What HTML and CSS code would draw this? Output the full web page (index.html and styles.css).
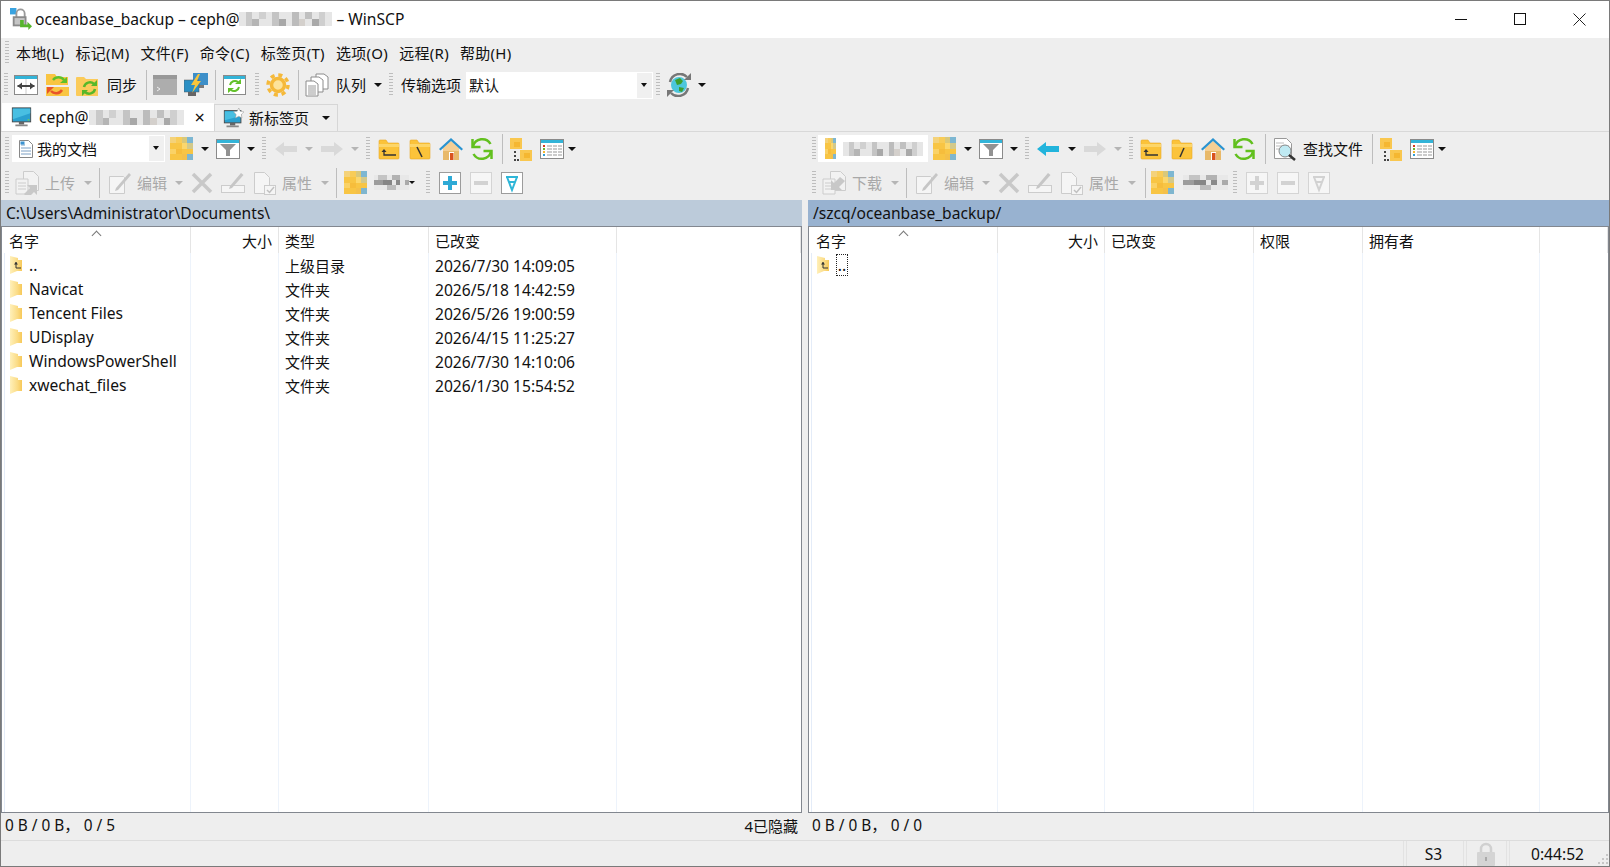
FILE: index.html
```html
<!DOCTYPE html>
<html lang="zh">
<head>
<meta charset="utf-8">
<title>WinSCP</title>
<link rel="stylesheet" href="styles.css">
</head>
<body>
<svg class="sprite" xmlns="http://www.w3.org/2000/svg">
  <defs>
    <linearGradient id="dirfill" x1="0" x2="1" y1="0" y2="0"><stop offset="0" stop-color="#fff0ba"/><stop offset=".6" stop-color="#fbdc86"/><stop offset="1" stop-color="#f7c95a"/></linearGradient>
    <symbol id="mos-light" viewBox="0 0 14 2" preserveAspectRatio="none">
      <rect width="14" height="2" fill="#e6e6e6"/><rect x="1" width="1" height="2" fill="#c9c9c9"/><rect x="2" y="1" width="1" height="1" fill="#b5b5b5"/><rect x="3" width="1" height="1" fill="#d0d0d0"/><rect x="5" width="1" height="2" fill="#c4c4c4"/><rect x="6" y="1" width="1" height="1" fill="#a8a8a8"/><rect x="8" width="1" height="2" fill="#bcbcbc"/><rect x="9" y="1" width="1" height="1" fill="#d4d0cc"/><rect x="10" width="1" height="1" fill="#c0c0c0"/><rect x="11" y="1" width="1" height="1" fill="#a9a9a9"/><rect x="12" width="1" height="2" fill="#cfcfcf"/>
    </symbol>
    <symbol id="mos-dark" viewBox="0 0 8 3" preserveAspectRatio="none">
      <rect width="8" height="3" fill="#e8e8e8"/><rect y="1" width="2" height="1" fill="#9c9c9c"/><rect x="1" width="2" height="1" fill="#c4c4c4"/><rect x="2" y="1" width="2" height="1" fill="#868686"/><rect x="3" y="2" width="2" height="1" fill="#bcbcbc"/><rect x="4" width="2" height="1" fill="#b2b2b2"/><rect x="5" y="1" width="1" height="1" fill="#8a8a8a"/><rect x="7" y="1" width="1" height="1" fill="#aaaaaa"/>
    </symbol>
    <symbol id="mos-folder" viewBox="0 0 4 4" preserveAspectRatio="none">
      <rect width="4" height="4" fill="#f8c544"/><rect width="1" height="1" fill="#f4d27a"/><rect x="1" width="1" height="1" fill="#f8cc58"/><rect x="2" width="1" height="1" fill="#d9c87a"/><rect x="3" width="1" height="1" fill="#7db7d2"/><rect x="2" y="1" width="1" height="1" fill="#fbd76d"/><rect x="3" y="1" width="1" height="1" fill="#d3c98a"/><rect y="2" width="1" height="1" fill="#fad266"/><rect x="1" y="2" width="1" height="1" fill="#f6bd3c"/><rect x="3" y="3" width="1" height="1" fill="#7fb6cf"/><rect x="2" y="3" width="1" height="1" fill="#f4c04a"/>
    </symbol>
    <symbol id="compare" viewBox="0 0 24 24"><rect x=".5" y="2.500" width="23" height="19" fill="#fff" stroke="#8a8a8a"/><rect x="1" y="3" width="22" height="3" fill="#33b4d8"/><path d="M12 6v15" stroke="#ccc"/><path d="M3.500 13h17" stroke="#444" stroke-width="2"/><path d="M8 9.500 3.500 13 8 16.500zM16 9.500l4.500 3.500-4.500 3.500z" fill="#444"/></symbol>
    <symbol id="fsync" viewBox="0 0 24 24"><path d="M1 1h9l2 3h11v8H1z" fill="#f9c542"/><path d="M1 14h23v9H1z" fill="#f9c542"/><path d="M8 7a7 7 0 0 1 11 0" fill="none" stroke="#5ec12a" stroke-width="2.500"/><path d="M15 10h7V4z" fill="#5ec12a"/><path d="M17 17a7 7 0 0 1-11 1" fill="none" stroke="#e8542a" stroke-width="2.500"/><path d="M9 14H2v7z" fill="#e8542a"/></symbol>
    <symbol id="fgreen" viewBox="0 0 24 24"><path d="M0 5a1 1 0 0 1 1-1h7l2 2h12v17H1a1 1 0 0 1-1-1z" fill="#fbcb5a"/><path d="M8 14a6 6 0 0 1 10-3" fill="none" stroke="#57b82a" stroke-width="2.500"/><path d="M15 13h6V7z" fill="#57b82a"/><path d="M19 16a6 6 0 0 1-10 3" fill="none" stroke="#57b82a" stroke-width="2.500"/><path d="M12 17H6v6z" fill="#57b82a"/></symbol>
    <symbol id="term" viewBox="0 0 24 24"><rect y="2" width="24" height="20" fill="#adadad"/><rect y="2" width="24" height="4" fill="#999"/><path d="m4 14 3 2-3 2" fill="none" stroke="#eee"/></symbol>
    <symbol id="putty" viewBox="0 0 24 24"><rect x="9" y="0" width="15" height="12" fill="#3d8fc9"/><rect x="11" y="12" width="9" height="3" fill="#7a7a7a"/><rect y="7" width="15" height="12" fill="#2a8fc4" stroke="#555" stroke-width=".5"/><rect x="4" y="19" width="8" height="4" fill="#666"/><path d="m14 1-7 11h4l-3 8 9-12h-4l3-7z" fill="#f8c53a"/></symbol>
    <symbol id="wsync" viewBox="0 0 24 24"><rect x=".5" y="2.500" width="22" height="19" fill="#fff" stroke="#8a8a8a"/><rect x="1" y="3" width="21" height="3" fill="#33b4d8"/><path d="M7 12a5 5 0 0 1 8-3" fill="none" stroke="#62c12a" stroke-width="2"/><path d="M12 11h6V6z" fill="#62c12a"/><path d="M16 14a5 5 0 0 1-8 3" fill="none" stroke="#62c12a" stroke-width="2"/><path d="M11 15H5v5z" fill="#62c12a"/></symbol>
    <symbol id="gear" viewBox="0 0 24 24"><circle cx="12" cy="12" r="10" fill="none" stroke="#f5b93a" stroke-width="3.500" stroke-dasharray="4.100 3.750"/><circle cx="12" cy="12" r="6.500" fill="#fde39a" stroke="#f5b93a" stroke-width="3.500"/></symbol>
    <symbol id="queue" viewBox="0 0 24 24"><path d="M11 1h8l4 3v12H11z" fill="#fff" stroke="#8c8c8c"/><path d="M6 4h8l4 3v12H6z" fill="#fff" stroke="#8c8c8c"/><path d="M1 8h8l4 3v12H1z" fill="#fff" stroke="#8c8c8c"/><path d="M3 13h8M3 15h8M3 17h8M3 19h8M3 21h8" stroke="#9a9a9a"/></symbol>
    <symbol id="globe" viewBox="0 0 24 24"><circle cx="12" cy="12" r="8" fill="#4cc6dc"/><path d="M8 7l5-2 3 3-2 3-4 1zM12 14l5 1-2 4-3-1z" fill="#3e9f2e"/><path d="M3 9a10 10 0 0 1 17-5" fill="none" stroke="#777" stroke-width="2.500"/><path d="M17 7h7V0z" fill="#777"/><path d="M21 15a10 10 0 0 1-17 5" fill="none" stroke="#777" stroke-width="2.500"/><path d="M7 17H0v7z" fill="#777"/></symbol>
    <symbol id="pc" viewBox="0 0 24 24"><rect x="1.500" y="1" width="21" height="16" fill="#2aa0cf" stroke="#444"/><path d="M2 2h20v5L2 14z" fill="#48bfe2"/><rect x="19" y="14" width="2" height="1.500" fill="#7ad04a"/><rect x="9" y="17" width="6" height="3" fill="#666"/><rect x="5" y="20" width="14" height="2" fill="#888"/></symbol>
    <symbol id="pcstar" viewBox="0 0 24 24"><rect x="1.500" y="3" width="19" height="14" fill="#2aa0cf" stroke="#444"/><path d="M2 4h18v5L2 14z" fill="#48bfe2"/><rect x="8" y="17" width="6" height="3" fill="#666"/><rect x="4" y="20" width="14" height="2" fill="#888"/><path d="m18 0 1.800 3.800 4.200.6-3 2.900.7 4.100-3.700-2-3.700 2 .7-4.100-3-2.900 4.200-.6z" fill="#fff" stroke="#999" stroke-width=".6"/></symbol>
    <symbol id="doc" viewBox="0 0 16 20"><path d="M1.500 1.500h9l4 4v13h-13z" fill="#fff" stroke="#888"/><path d="M3 6h4M3 9h10M3 12h10M3 15h10" stroke="#7a9fc4"/><rect x="2.500" y="2.500" width="4" height="3" fill="#3b93d1"/></symbol>
    <symbol id="filter" viewBox="0 0 24 24"><rect x=".5" y="2.500" width="23" height="19" fill="#fff" stroke="#8a8a8a"/><rect x="1" y="3" width="22" height="3" fill="#33b4d8"/><path d="M4 7h16l-6 6v6h-4v-6z" fill="#929292"/></symbol>
    <symbol id="back" viewBox="0 0 22 16"><path d="M0 8 9 1v4h13v6H9v4z"/></symbol>
    <symbol id="fwd" viewBox="0 0 22 16"><path d="M22 8 13 1v4H0v6h13v4z"/></symbol>
    <symbol id="fup" viewBox="0 0 24 24"><path d="M2 4a1 1 0 0 1 1-1h6l2 3h10a1 1 0 0 1 1 1v14a1 1 0 0 1-1 1H3a1 1 0 0 1-1-1z" fill="#fbc33a" stroke="#e9a825" stroke-width=".6"/><path d="M2 7h20v3H2z" fill="#fdd669"/><path d="M7 13v5h12" fill="none" stroke="#333" stroke-width="1.300"/><path d="m4.500 15 2.500-3 2.500 3z" fill="#333"/></symbol>
    <symbol id="froot" viewBox="0 0 24 24"><path d="M2 4a1 1 0 0 1 1-1h6l2 3h10a1 1 0 0 1 1 1v14a1 1 0 0 1-1 1H3a1 1 0 0 1-1-1z" fill="#fbc33a" stroke="#e9a825" stroke-width=".6"/><path d="M2 7h20v3H2z" fill="#fdd669"/><path d="m9 10 5 10" stroke="#333" stroke-width="1.500"/></symbol>
    <symbol id="froots" viewBox="0 0 24 24"><path d="M2 4a1 1 0 0 1 1-1h6l2 3h10a1 1 0 0 1 1 1v14a1 1 0 0 1-1 1H3a1 1 0 0 1-1-1z" fill="#fbc33a" stroke="#e9a825" stroke-width=".6"/><path d="M2 7h20v3H2z" fill="#fdd669"/><path d="m14 11-4 9" stroke="#333" stroke-width="1.500"/></symbol>
    <symbol id="home" viewBox="0 0 24 24"><path d="M4 11h16v12H4z" fill="#e8b96a"/><path d="M4 11 12 4l8 7v3H4z" fill="#f5cf94"/><path d="M0 12 12 1l12 11-1.500 1.500L12 4 1.500 13.500z" fill="#2a93d0"/><rect x="10" y="15" width="5" height="8" fill="#fff"/><rect x="11" y="16" width="3.500" height="7" fill="#d9531e"/></symbol>
    <symbol id="reload" viewBox="0 0 24 24"><path d="M3 9.500A9.500 9.500 0 0 1 20.500 7" fill="none" stroke="#62c01e" stroke-width="2.500"/><path d="M2.500 2v8h8" fill="none" stroke="#62c01e" stroke-width="2.500"/><path d="M21 14.500A9.500 9.500 0 0 1 3.500 17" fill="none" stroke="#62c01e" stroke-width="2.500"/><path d="M21.500 22v-8h-8" fill="none" stroke="#62c01e" stroke-width="2.500"/></symbol>
    <symbol id="tree" viewBox="0 0 24 24"><rect x="1" y="1" width="12" height="11" fill="#f9c74f"/><rect x="5" y="5" width="6" height="5" fill="#f5b731"/><rect x="11" y="13" width="12" height="11" fill="#f9c74f"/><rect x="15" y="16" width="6" height="5" fill="#f5b731"/><path d="M5 14h2v2H5zM5 18h2v2H5zM5 22h2v2H5zM8 22h2v2H8z" fill="#444"/></symbol>
    <symbol id="cols" viewBox="0 0 24 24"><rect x=".5" y="2.500" width="23" height="19" fill="#fff" stroke="#8a8a8a"/><rect x="1" y="3" width="22" height="3" fill="#33b4d8"/><rect x="3" y="8" width="2" height="2" fill="#d4391c"/><rect x="3" y="11" width="2" height="2" fill="#6cb52d"/><rect x="3" y="14" width="2" height="2" fill="#f5b731"/><rect x="3" y="17" width="2" height="2" fill="#2f9ed3"/><path d="M7 9h5M13 9h4M18 9h4M7 12h5M13 12h4M18 12h4M7 15h5M13 15h4M18 15h4M7 18h5M13 18h4M18 18h4" stroke="#999"/></symbol>
    <symbol id="find" viewBox="0 0 24 24"><path d="M1.500 1.500h12l5 5v15h-17z" fill="#fff" stroke="#999"/><path d="M3 6h8M3 9h13M3 12h13" stroke="#bbb"/><circle cx="12" cy="14" r="6" fill="#bfeaf3" stroke="#888"/><path d="m16 18 6 5" stroke="#333" stroke-width="2.500"/></symbol>
    <symbol id="upl" viewBox="0 0 24 24"><path d="M8.500 .5h10l5 5v14h-15z" fill="#f2f2f2" stroke="#ccc"/><path d="M1 8h12v15H1z" fill="#f2f2f2" stroke="#ccc"/><path d="M3 12h8M3 15h8M3 18h8" stroke="#ccc"/><path d="m9 23 6-6-3-3h10v10l-3-3-6 6z" fill="#c8c8c8"/></symbol>
    <symbol id="dnl" viewBox="0 0 24 24"><path d="M8.500 .5h10l5 5v14h-15z" fill="#f2f2f2" stroke="#ccc"/><path d="M1 8h12v15H1z" fill="#f2f2f2" stroke="#ccc"/><path d="M3 12h8M3 15h8M3 18h8" stroke="#ccc"/><path d="m23 10-6 6 3 3H9V9l3 3 6-6z" fill="#c8c8c8"/></symbol>
    <symbol id="edit" viewBox="0 0 24 24"><path d="M1.500 5.500h14l1 1v16h-15z" fill="#f5f5f5" stroke="#ccc"/><path d="m8 17 13-15 2 2L10 19l-3 1z" fill="#c6c6c6"/></symbol>
    <symbol id="del" viewBox="0 0 24 24"><path d="M3 3 21 21M21 3 3 21" stroke="#c8c8c8" stroke-width="3.500"/></symbol>
    <symbol id="ren" viewBox="0 0 24 24"><rect x=".5" y="14.500" width="23" height="7" fill="#f5f5f5" stroke="#ccc"/><path d="m9 15 11-13 2.500 2L11 17l-3 1z" fill="#c6c6c6"/></symbol>
    <symbol id="prop" viewBox="0 0 24 24"><path d="M1.500 1.500h10l5 5v16h-15z" fill="#f5f5f5" stroke="#ccc"/><rect x="11.500" y="14.500" width="11" height="9" fill="#f5f5f5" stroke="#ccc"/><path d="m14 19 2.500 2.500L21 16" fill="none" stroke="#c0c0c0" stroke-width="1.500"/></symbol>
    <symbol id="sel" viewBox="0 0 22 22"><rect x=".5" y=".5" width="21" height="21" fill="#fff" stroke="#9c9c9c"/><path d="M9 4h4v5h5v4h-5v5H9v-5H4V9h5z" fill="#2eaad6"/></symbol>
    <symbol id="unsel" viewBox="0 0 22 22"><rect x=".5" y=".5" width="21" height="21" fill="#f6f6f6" stroke="#d4d4d4"/><rect x="4" y="9" width="14" height="4" fill="#d2d2d2"/></symbol>
    <symbol id="inv" viewBox="0 0 22 22"><rect x=".5" y=".5" width="21" height="21" fill="#fff" stroke="#9c9c9c"/><path d="M5 5h12M6 5l5 13 5-13M8 10h6" fill="none" stroke="#2eb6d8" stroke-width="2"/></symbol>
    <symbol id="sel-d" viewBox="0 0 22 22"><rect x=".5" y=".5" width="21" height="21" fill="#f6f6f6" stroke="#d4d4d4"/><path d="M9 4h4v5h5v4h-5v5H9v-5H4V9h5z" fill="#d2d2d2"/></symbol>
    <symbol id="inv-d" viewBox="0 0 22 22"><rect x=".5" y=".5" width="21" height="21" fill="#f6f6f6" stroke="#d4d4d4"/><path d="M5 5h12M6 5l5 13 5-13M8 10h6" fill="none" stroke="#d2d2d2" stroke-width="2"/></symbol>
    <symbol id="dir" viewBox="0 0 12 18"><path d="M0 0 8 2v2h4v11H7l-7 3z" fill="url(#dirfill)"/></symbol>
    <symbol id="dirup" viewBox="0 0 12 18"><path d="M0 0 8 2v2h4v11H7l-7 3z" fill="url(#dirfill)"/><path d="M6 6v6h5" fill="none" stroke="#333"/><path d="m4 8.500 2-2.500 2 2.500z" fill="#333"/></symbol>
    <symbol id="lock" viewBox="0 0 18 24"><path d="M4 11V7a5 5 0 0 1 10 0v4" fill="none" stroke="#d0d0d0" stroke-width="2.500"/><rect y="10" width="18" height="14" rx="1" fill="#d4d4d4"/><rect x="8" y="15" width="2" height="4" fill="#aaa"/></symbol>
    <symbol id="app" viewBox="0 0 24 24"><rect x="0" y="0" width="7" height="7" fill="#3aa3e0"/><path d="M7 10V6a4.500 4.500 0 0 1 9 0v4" fill="none" stroke="#999" stroke-width="2"/><rect x="3" y="9" width="15" height="11" fill="#8a8a8a"/><rect x="5" y="11" width="11" height="7" fill="#c5c5c5"/><path d="M11 13h4v5h4v-3l5 5-4 4v-3h-9z" fill="#56b52c"/></symbol>
  </defs>
</svg>

<div class="win">
  <header class="titlebar">
    <svg class="appicon"><use href="#app"/></svg>
    <span class="title">oceanbase_backup – ceph@</span>
    <svg class="mos mos-title"><use href="#mos-light"/></svg>
    <span class="title">&nbsp;– WinSCP</span>
    <div class="wc">
      <span class="wbtn"><svg width="13" height="13"><path d="M0 6.500h12" stroke="#111"/></svg></span>
      <span class="wbtn"><svg width="13" height="13"><rect x=".5" y=".5" width="11" height="11" fill="none" stroke="#111"/></svg></span>
      <span class="wbtn"><svg width="13" height="13"><path d="M.5.500l12 12M12.500.500l-12 12" stroke="#222"/></svg></span>
    </div>
  </header>

  <nav class="menubar">
    <i class="grip"></i>
    <span>本地(L)</span><span>标记(M)</span><span>文件(F)</span><span>命令(C)</span><span>标签页(T)</span><span>选项(O)</span><span>远程(R)</span><span>帮助(H)</span>
  </nav>

  <div class="tb tb-main">
    <i class="grip g9"></i>
    <span class="i"><svg><use href="#compare"/></svg></span>
    <span class="i"><svg><use href="#fsync"/></svg></span>
    <span class="i"><svg><use href="#fgreen"/></svg></span>
    <span class="t ml4">同步</span>
    <i class="sep ml5"></i>
    <span class="i"><svg><use href="#term"/></svg></span>
    <span class="i"><svg><use href="#putty"/></svg></span>
    <i class="sep"></i>
    <span class="i ml1"><svg><use href="#wsync"/></svg></span>
    <i class="grip ml1"></i>
    <span class="i mln1"><svg><use href="#gear"/></svg></span>
    <i class="sep ml1"></i>
    <span class="i"><svg><use href="#queue"/></svg></span>
    <span class="t ml4">队列</span>
    <span class="a ml4"></span>
    <i class="grip"></i>
    <span class="t ml4">传输选项</span>
    <span class="combo combo-tx ml5"><b>默认</b><em class="cbtn"></em></span>
    <i class="grip mln1"></i>
    <span class="i mln1"><svg><use href="#globe"/></svg></span>
    <span class="a"></span>
  </div>

  <div class="tabs">
    <div class="tab on">
      <svg class="tabic"><use href="#pc"/></svg>
      <span class="tabtx en">ceph@</span>
      <svg class="mos mos-tab"><use href="#mos-light"/></svg>
      <span class="tabx">×</span>
    </div>
    <div class="tab">
      <svg class="tabic"><use href="#pcstar"/></svg>
      <span class="tabtx">新标签页</span>
      <span class="a ml9"></span>
    </div>
  </div>

  <main class="panes">
    <section class="pane">
      <div class="tb">
        <i class="grip g11"></i>
        <span class="combo combo-l"><svg class="cdoc"><use href="#doc"/></svg><b>我的文档</b><em class="cbtn"></em></span>
        <span class="i ml1"><svg class="mq"><use href="#mos-folder"/></svg></span>
        <span class="a"></span>
        <span class="i"><svg><use href="#filter"/></svg></span>
        <span class="a"></span>
        <i class="grip"></i>
        <span class="i off"><svg class="arw"><use href="#back"/></svg></span>
        <span class="a dim"></span>
        <span class="i off"><svg class="arw"><use href="#fwd"/></svg></span>
        <span class="a dim"></span>
        <i class="grip"></i>
        <span class="i mln1"><svg><use href="#fup"/></svg></span>
        <span class="i"><svg><use href="#froot"/></svg></span>
        <span class="i"><svg><use href="#home"/></svg></span>
        <span class="i"><svg><use href="#reload"/></svg></span>
        <i class="sep ml1"></i>
        <span class="i"><svg><use href="#tree"/></svg></span>
        <span class="i"><svg><use href="#cols"/></svg></span>
        <span class="a mln3"></span>
      </div>
      <div class="tb tb-tall">
        <i class="grip g11"></i>
        <span class="i mln1"><svg><use href="#upl"/></svg></span>
        <span class="t off ml3">上传</span>
        <span class="a dim ml5"></span>
        <i class="sep"></i>
        <span class="i ml2"><svg><use href="#edit"/></svg></span>
        <span class="t off ml2">编辑</span>
        <span class="a dim ml4"></span>
        <span class="i"><svg><use href="#del"/></svg></span>
        <span class="i"><svg><use href="#ren"/></svg></span>
        <span class="i ml1"><svg><use href="#prop"/></svg></span>
        <span class="t off ml2">属性</span>
        <span class="a dim ml5"></span>
        <i class="sep"></i>
        <span class="i ml1"><svg class="mq"><use href="#mos-folder"/></svg></span>
        <svg class="mos mos-l ml3"><use href="#mos-dark"/></svg>
        <span class="a tiny"></span>
        <i class="grip ml5"></i>
        <span class="i"><svg class="sq"><use href="#sel"/></svg></span>
        <span class="i"><svg class="sq"><use href="#unsel"/></svg></span>
        <span class="i"><svg class="sq"><use href="#inv"/></svg></span>
      </div>
      <div class="path path-l">C:\Users\Administrator\Documents\</div>
      <div class="list list-l">
        <div class="hd">名字<i class="chev"></i></div><div class="hd rt">大小</div><div class="hd">类型</div><div class="hd">已改变</div><div class="hd"></div>

        <div class="c nm"><svg><use href="#dirup"/></svg>..</div><div class="c"></div><div class="c">上级目录</div><div class="c en">2026/7/30 14:09:05</div><div class="c"></div>
        <div class="c nm"><svg><use href="#dir"/></svg>Navicat</div><div class="c"></div><div class="c">文件夹</div><div class="c en">2026/5/18 14:42:59</div><div class="c"></div>
        <div class="c nm"><svg><use href="#dir"/></svg>Tencent Files</div><div class="c"></div><div class="c">文件夹</div><div class="c en">2026/5/26 19:00:59</div><div class="c"></div>
        <div class="c nm"><svg><use href="#dir"/></svg>UDisplay</div><div class="c"></div><div class="c">文件夹</div><div class="c en">2026/4/15 11:25:27</div><div class="c"></div>
        <div class="c nm"><svg><use href="#dir"/></svg>WindowsPowerShell</div><div class="c"></div><div class="c">文件夹</div><div class="c en">2026/7/30 14:10:06</div><div class="c"></div>
        <div class="c nm"><svg><use href="#dir"/></svg>xwechat_files</div><div class="c"></div><div class="c">文件夹</div><div class="c en">2026/1/30 15:54:52</div><div class="c"></div>
        <div class="c nm"></div><div class="c"></div><div class="c"></div><div class="c"></div><div class="c"></div>
      </div>
      <div class="stat"><span>0 B / 0 B， 0 / 5</span><span class="hid">4已隐藏</span></div>
    </section>

    <div class="split"></div>

    <section class="pane">
      <div class="tb">
        <i class="grip g10"></i>
        <span class="combo combo-r"><svg class="mos mos-cf"><use href="#mos-folder"/></svg><svg class="mos mos-cr"><use href="#mos-light"/></svg></span>
        <span class="i ml1"><svg class="mq"><use href="#mos-folder"/></svg></span>
        <span class="a"></span>
        <span class="i"><svg><use href="#filter"/></svg></span>
        <span class="a"></span>
        <i class="grip"></i>
        <span class="i blue mln1"><svg class="arw"><use href="#back"/></svg></span>
        <span class="a ml1"></span>
        <span class="i off"><svg class="arw"><use href="#fwd"/></svg></span>
        <span class="a dim"></span>
        <i class="grip"></i>
        <span class="i mln2"><svg><use href="#fup"/></svg></span>
        <span class="i"><svg><use href="#froots"/></svg></span>
        <span class="i"><svg><use href="#home"/></svg></span>
        <span class="i"><svg><use href="#reload"/></svg></span>
        <i class="sep ml2"></i>
        <span class="i ml5 w24"><svg><use href="#find"/></svg></span>
        <span class="t ml6">查找文件</span>
        <i class="sep ml5"></i>
        <span class="i"><svg><use href="#tree"/></svg></span>
        <span class="i"><svg><use href="#cols"/></svg></span>
        <span class="a mln3"></span>
      </div>
      <div class="tb tb-tall">
        <i class="grip g10"></i>
        <span class="i"><svg><use href="#dnl"/></svg></span>
        <span class="t off ml3">下载</span>
        <span class="a dim ml5"></span>
        <i class="sep"></i>
        <span class="i ml2"><svg><use href="#edit"/></svg></span>
        <span class="t off ml2">编辑</span>
        <span class="a dim ml4"></span>
        <span class="i"><svg><use href="#del"/></svg></span>
        <span class="i"><svg><use href="#ren"/></svg></span>
        <span class="i ml1"><svg><use href="#prop"/></svg></span>
        <span class="t off ml2">属性</span>
        <span class="a dim ml5"></span>
        <i class="sep ml2"></i>
        <span class="i mln1"><svg class="mq"><use href="#mos-folder"/></svg></span>
        <svg class="mos mos-r ml5"><use href="#mos-dark"/></svg>
        <i class="grip ml1"></i>
        <span class="i"><svg class="sq"><use href="#sel-d"/></svg></span>
        <span class="i"><svg class="sq"><use href="#unsel"/></svg></span>
        <span class="i"><svg class="sq"><use href="#inv-d"/></svg></span>
      </div>
      <div class="path path-r">/szcq/oceanbase_backup/</div>
      <div class="list list-r">
        <div class="hd">名字<i class="chev"></i></div><div class="hd rt">大小</div><div class="hd">已改变</div><div class="hd">权限</div><div class="hd">拥有者</div><div class="hd"></div>

        <div class="c nm"><svg><use href="#dirup"/></svg><span class="focus">..</span></div><div class="c"></div><div class="c"></div><div class="c"></div><div class="c"></div><div class="c"></div>
        <div class="c nm"></div><div class="c"></div><div class="c"></div><div class="c"></div><div class="c"></div><div class="c"></div>
      </div>
      <div class="stat"><span>0 B / 0 B， 0 / 0</span></div>
    </section>
  </main>

  <footer class="sbar">
    <div class="sb grow"></div>
    <div class="sb s3">S3</div>
    <div class="sb slock"><svg width="18" height="24"><use href="#lock"/></svg></div>
    <div class="sb stime">0:44:52<i class="rgrip"></i></div>
  </footer>
</div>
</body>
</html>
```

FILE: styles.css
```css
* { box-sizing: border-box; }
html, body { margin: 0; height: 100%; }
body {
  font: 15px/20px "Noto Sans", "Noto Sans CJK SC", sans-serif;
  color: #111;
  background: #eee;
  overflow: hidden;
}
.sprite { position: absolute; width: 0; height: 0; }
.en { font-size: 15.600px; }

.win {
  width: 1610px;
  height: 867px;
  border: 1px solid #7a7a7a;
  display: flex;
  flex-direction: column;
  background: #eee;
}

/* Title bar */
.titlebar {
  height: 37px;
  flex: none;
  display: flex;
  align-items: center;
  background: #fff;
  padding: 0 0 1px 9px;
}
.appicon { width: 22px; height: 22px; margin-right: 3px; flex: none; }
.title { font-size: 15.600px; white-space: pre; }
.wc { margin-left: auto; display: flex; }
.wbtn { width: 59px; height: 36px; display: flex; align-items: center; justify-content: center; }

/* Menu */
.menubar {
  height: 32px;
  flex: none;
  display: flex;
  align-items: center;
  gap: 11px;
  padding: 0 6px 2px 0;
  letter-spacing: .3px;
}
.menubar .grip { width: 11px; margin-right: -7px; height: 24px; }
.menubar span { white-space: nowrap; }

/* Toolbars */
.tb {
  height: 33px;
  flex: none;
  display: flex;
  align-items: center;
  white-space: nowrap;
}
.tb-main { padding-bottom: 3px; }
.tb-tall { height: 35px; }

.grip {
  flex: none;
  width: 12px;
  height: 24px;
  display: block;
  background: repeating-linear-gradient(#bdbdbd 0 1px, transparent 1px 3px) center / 4px 100% no-repeat;
}
.grip.g9 { width: 9px; background-position: 3px 0; }
.grip.g10 { width: 10px; background-position: 4px 0; }
.grip.g11 { width: 11px; background-position: 4px 0; }

.sep {
  flex: none;
  width: 1px;
  height: 30px;
  background: #bdbdbd;
  margin: 0 2px 0 4px;
  display: block;
}
.i {
  flex: none;
  width: 31px;
  height: 24px;
  display: flex;
  align-items: center;
  justify-content: center;
}
.i svg { width: 24px; height: 24px; display: block; }
.i.w24 { width: 24px; }
.i svg.sq { width: 22px; height: 22px; }
.i svg.mq { width: 23px; height: 23px; shape-rendering: crispEdges; }
.i svg.arw { width: 22px; height: 16px; }
.i.off svg.arw { fill: #d9d9d9; }
.i.blue svg.arw { fill: #22b4dc; }

.a {
  flex: none;
  width: 15px;
  height: 12px;
  position: relative;
}
.a::after {
  content: "";
  position: absolute;
  left: 4px;
  top: 4px;
  border: 4px solid transparent;
  border-top: 4px solid #111;
  border-bottom: 0;
}
.a.dim::after { border-top-color: #b5b5b5; }
.a.tiny { width: 8px; }
.a.tiny::after { left: 0; border-width: 3px 3px 0; }

.t { flex: none; }
.t.off { color: #a8a8a8; }

.ml1 { margin-left: 1px; }
.ml2 { margin-left: 2px; }
.ml3 { margin-left: 3px; }
.ml4 { margin-left: 4px; }
.ml5 { margin-left: 5px; }
.ml6 { margin-left: 6px; }
.ml9 { margin-left: 9px; }
.sep.ml1 { margin-left: 5px; }
.sep.ml2 { margin-left: 6px; }
.sep.ml5 { margin-left: 9px; }
.mln1 { margin-left: -1px; }
.mln2 { margin-left: -2px; }
.mln3 { margin-left: -3px; }

/* Combos */
.combo {
  flex: none;
  height: 27px;
  background: #fff;
  display: flex;
  align-items: center;
  padding-left: 3px;
  position: relative;
}
.combo b { font-weight: 400; }
.combo-tx { width: 187px; }
.combo-l { width: 153px; padding-left: 6px; }
.combo-r { width: 110px; padding-left: 7px; }
.cdoc { width: 16px; height: 20px; margin-right: 3px; flex: none; }
.cbtn {
  position: absolute;
  right: 1px;
  top: 1px;
  bottom: 1px;
  width: 15px;
  background: #f0f0f0;
}
.cbtn::after {
  content: "";
  position: absolute;
  left: 4px;
  top: 10px;
  border: 3.500px solid transparent;
  border-top: 4px solid #111;
  border-bottom: 0;
}

/* Pixelated, redacted values */
.mos { display: block; flex: none; shape-rendering: crispEdges; }
.mos-title { width: 93px; height: 14px; }
.mos-tab { width: 95px; height: 15px; }
.mos-l { width: 35px; height: 15px; }
.mos-r { width: 45px; height: 15px; }
.mos-cf { width: 11px; height: 21px; margin-right: 7px; }
.mos-cr { width: 80px; height: 14px; }

/* Tabs */
.tabs {
  height: 29px;
  flex: none;
  display: flex;
  align-items: flex-end;
  padding-left: 1px;
  border-bottom: 1px solid #d8d8d8;
}
.tab {
  height: 27px;
  width: 124px;
  display: flex;
  align-items: center;
  padding-left: 8px;
  border: 1px solid #d6d6d6;
  border-bottom: 0;
}
.tab.on {
  width: 212px;
  height: 28px;
  background: #fff;
  border: 0;
  padding-left: 9px;
}
.tabic { width: 21px; height: 21px; flex: none; margin-right: 7px; }
.tab:not(.on) .tabic { margin-right: 5px; }
.tabtx { flex: none; }
.tabx { margin-left: 11px; font-size: 18px; }

/* Panes */
.panes {
  flex: 1;
  min-height: 0;
  display: grid;
  grid-template-columns: 801px 6px 801px;
}
.pane { display: flex; flex-direction: column; min-width: 0; }
.path { height: 26px; flex: none; line-height: 27px; padding-left: 5px; font-size: 15.600px; }
.path-l { background: #bccbda; }
.path-r { background: #98b2d0; }

.list {
  flex: 1;
  min-height: 0;
  display: grid;
  background: #fff;
  border: 1px solid #82878f;
  grid-template-rows: 26px repeat(6, 24px) 1fr;
}
.list-l { grid-template-columns: 189px 88px 150px 188px 1fr; }
.list-r { grid-template-columns: 189px 107px 149px 109px 177px 1fr; grid-template-rows: 26px 24px 1fr; }

.hd {
  position: relative;
  border-right: 1px solid #e5e5e5;
  padding: 2px 0 0 6px;
  line-height: 24px;
  font-size: 15px;
}
.hd:last-child { border-right: 0; }
.hd.rt { text-align: right; padding-right: 6px; }
.hd:first-child { padding-left: 7px; }
.chev {
  position: absolute;
  left: 91px;
  top: 5px;
  width: 7px;
  height: 7px;
  border-left: 1px solid #777;
  border-top: 1px solid #777;
  transform: rotate(45deg);
}
.c {
  border-right: 1px solid #edf3fb;
  padding-left: 6px;
  line-height: 26px;
  white-space: nowrap;
}
.list-l .c:nth-child(5n), .list-r .c:nth-child(6n) { border-right: 0; }
.c.nm {
  display: flex;
  align-items: center;
  margin-left: 2px;
  padding-left: 5px;
  border-left: 1px solid #e4ecf8;
  font-size: 15.600px;
}
.c.nm svg { width: 12px; height: 18px; margin-right: 7px; flex: none; }
.focus {
  display: block;
  width: 12px;
  height: 22px;
  line-height: 22px;
  outline: 1px dotted #222;
  outline-offset: -1px;
  text-align: center;
}

.split { background: #eee; }

/* Status */
.stat {
  height: 27px;
  flex: none;
  display: flex;
  justify-content: space-between;
  align-items: center;
  padding: 0 4px 2px;
  font-size: 15.400px;
}
.hid { font-size: 15px; }
.sbar {
  height: 26px;
  flex: none;
  display: flex;
  gap: 2px;
  border-top: 1px solid #dcdcdc;
}
.sb {
  flex: none;
  height: 25px;
  border-left: 1px solid #e2e2e2;
  border-right: 1px solid #e2e2e2;
  display: flex;
  align-items: center;
  justify-content: center;
  position: relative;
  font-size: 15.600px;
}
.grow { flex: 1; border: 0; border-right: 1px solid #e2e2e2; }
.s3 { width: 58px; padding-right: 3px; }
.slock { width: 41px; padding-right: 1px; }
.stime { width: 100px; padding-right: 4px; border-right: 0; }
.rgrip {
  position: absolute;
  right: 1px;
  bottom: 2px;
  width: 10px;
  height: 10px;
  background:
    linear-gradient(#c6c6c6, #c6c6c6) 8px 0 / 2px 2px no-repeat,
    linear-gradient(#c6c6c6, #c6c6c6) 4px 4px / 2px 2px no-repeat,
    linear-gradient(#c6c6c6, #c6c6c6) 8px 4px / 2px 2px no-repeat,
    linear-gradient(#c6c6c6, #c6c6c6) 0 8px / 2px 2px no-repeat,
    linear-gradient(#c6c6c6, #c6c6c6) 4px 8px / 2px 2px no-repeat,
    linear-gradient(#c6c6c6, #c6c6c6) 8px 8px / 2px 2px no-repeat;
}
```
